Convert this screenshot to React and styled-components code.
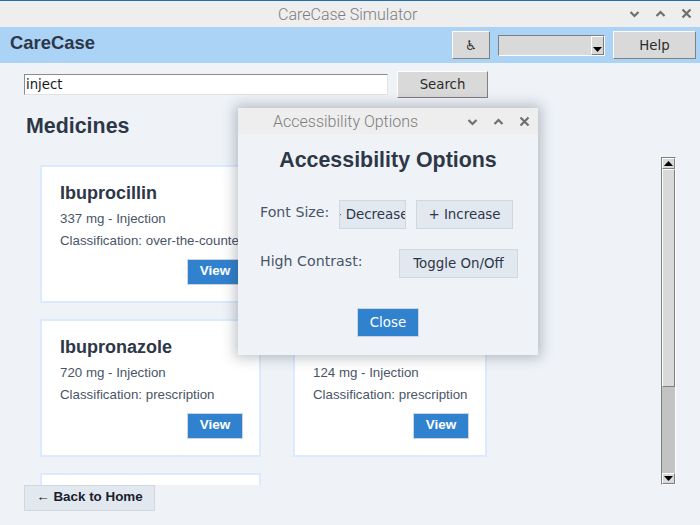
import React from "react";
import styled, { createGlobalStyle } from "styled-components";

const Global = createGlobalStyle`
  html, body { margin: 0; padding: 0; width: 700px; height: 525px; overflow: hidden; background: #eff3f8; }
  #root { width: 700px; height: 525px; }
`;

const Screen = styled.div`
  position: relative;
  width: 700px;
  height: 525px;
  display: flex;
  flex-direction: column;
  background: #eff3f8;
  overflow: hidden;
  font-family: "Liberation Sans", Arial, sans-serif;
`;

const TitleBar = styled.div`
  position: relative;
  flex: none;
  height: ${p => (p.$dialog ? 26 : 27)}px;
  box-sizing: border-box;
  background: #eeeeee;
  display: flex;
  align-items: center;
  justify-content: flex-end;
  gap: 13px;
  padding-right: 7px;
  ${p => (p.$dialog ? "" : "border-top: 1px solid #1f6fb0; padding-bottom: 1px;")}
`;

const TitleText = styled.div`
  position: absolute;
  left: ${p => p.$left}px;
  top: 0;
  bottom: 0;
  display: flex;
  align-items: center;
  font-family: Roboto, sans-serif;
  font-weight: 300;
  font-size: 16px;
  color: #7d7d7d;
  white-space: nowrap;
`;

const WinIcon = styled.svg`
  width: 13px;
  height: 13px;
  fill: none;
  stroke: #6f6f6f;
  stroke-width: 2.2;
`;

const Down = () => <WinIcon viewBox="0 0 13 13"><path d="M2.5 5 L6.5 9 L10.5 5" /></WinIcon>;
const Up = () => <WinIcon viewBox="0 0 13 13"><path d="M2.5 9 L6.5 5 L10.5 9" /></WinIcon>;
const X = () => <WinIcon viewBox="0 0 13 13"><path d="M2.5 2.5 L10.5 10.5 M10.5 2.5 L2.5 10.5" /></WinIcon>;

const Header = styled.header`
  flex: none;
  height: 36px;
  box-sizing: border-box;
  background: #aad3f5;
  display: flex;
  align-items: center;
  padding: 0 4px 0 10px;
`;

const Brand = styled.div`
  font-weight: 700;
  font-size: 18.4px;
  color: #2d3748;
  margin-top: -5px;
  flex: 1;
`;

const TkButton = styled.button`
  box-sizing: border-box;
  width: ${p => p.$w}px;
  height: ${p => p.$h}px;
  padding: 0;
  background: #d9d9d9;
  border: 1px solid;
  border-color: #ffffff #7f7f7f #7f7f7f #ffffff;
  font-family: "DejaVu Sans", sans-serif;
  font-size: 13.3px;
  color: #2b2b2b;
  display: flex;
  align-items: center;
  justify-content: center;
`;

const Combo = styled.div`
  box-sizing: border-box;
  width: 107px;
  height: 21px;
  margin: 0 8px 0 8px;
  background: #d9d9d9;
  border: 1px solid;
  border-color: #7f7f7f #ffffff #ffffff #7f7f7f;
  display: flex;
  justify-content: flex-end;
`;

const ComboArrow = styled.div`
  box-sizing: border-box;
  width: 13px;
  height: 19px;
  border: 1px solid;
  border-color: #ffffff #7f7f7f #7f7f7f #ffffff;
  display: flex;
  align-items: flex-end;
  justify-content: center;
  padding-bottom: 2px;
`;

const Arrow = styled.svg`
  width: 9px;
  height: 5px;
  fill: #000;
  display: block;
`;

const SearchRow = styled.div`
  flex: none;
  display: flex;
  align-items: center;
  height: 43px;
  padding: 0 0 0 24px;
  box-sizing: border-box;
`;

const SearchInput = styled.input`
  box-sizing: border-box;
  width: 364px;
  height: 21px;
  margin: 0 9px 0 0;
  padding: 0 1px;
  background: #fff;
  border: 1px solid;
  border-color: #8c8c8c #e2e2e2 #e2e2e2 #8c8c8c;
  outline: none;
  font-family: "DejaVu Sans", sans-serif;
  font-size: 13.3px;
  color: #1a1a1a;
`;

const PageTitle = styled.h1`
  margin: 0;
  box-sizing: border-box;
  padding: 8px 0 0 26px;
  height: 59px;
  flex: none;
  font-size: 21.4px;
  line-height: 25px;
  font-weight: 700;
  color: #2d3748;
`;

const Content = styled.div`
  flex: none;
  display: flex;
  height: 320px;
  padding-left: 40px;
  box-sizing: border-box;
  overflow: hidden;
`;

const CardGrid = styled.div`
  width: 621px;
  display: grid;
  grid-template-columns: 221px 194px;
  grid-auto-rows: 138px;
  column-gap: 32px;
  row-gap: 16px;
  align-content: start;
`;

const Card = styled.article`
  box-sizing: border-box;
  background: #fff;
  border: 2px solid #dbeafe;
  padding: 16px 16px 0 18px;
  display: flex;
  flex-direction: column;
  overflow: hidden;
`;

const CardName = styled.h2`
  margin: 0 0 7px;
  min-height: 21px;
  font-size: 18px;
  line-height: 21px;
  font-weight: 700;
  color: #2d3748;
  white-space: nowrap;
`;

const CardLine = styled.p`
  margin: 0 0 7px;
  font-size: 13.3px;
  line-height: 15px;
  color: #4a5568;
  white-space: nowrap;
`;

const ViewButton = styled.button`
  box-sizing: border-box;
  align-self: flex-end;
  width: 56px;
  height: 26px;
  margin: 4px 0 0;
  padding: 0 0 4px;
  background: #3182ce;
  border: 1px solid #cfd4da;
  color: #fff;
  font-family: "Liberation Sans", sans-serif;
  font-weight: 700;
  font-size: 13.5px;
`;

const Scrollbar = styled.div`
  position: absolute;
  left: 661px;
  top: 157px;
  width: 15px;
  height: 328px;
  box-sizing: border-box;
  background: #c3c3c3;
  border: 1px solid;
  border-color: #7f7f7f #ffffff #ffffff #7f7f7f;
  display: flex;
  flex-direction: column;
`;

const ScrollButton = styled.div`
  flex: none;
  box-sizing: border-box;
  height: 11px;
  background: #d9d9d9;
  border: 1px solid;
  border-color: #ffffff #7f7f7f #7f7f7f #ffffff;
  display: flex;
  align-items: center;
  justify-content: center;
`;

const ScrollThumb = styled.div`
  flex: none;
  box-sizing: border-box;
  height: 218px;
  background: #d9d9d9;
  border: 1px solid;
  border-color: #ffffff #7f7f7f #7f7f7f #ffffff;
`;

const ScrollTrack = styled.div`
  flex: 1;
`;

const FooterRow = styled.div`
  flex: none;
  padding-left: 24px;
`;

const BackButton = styled.button`
  box-sizing: border-box;
  width: 131px;
  height: 26px;
  padding: 0 0 4px;
  background: #e2e8f0;
  border: 1px solid #d3d6da;
  color: #1a202c;
  font-family: "Liberation Sans", sans-serif;
  font-weight: 700;
  font-size: 13.4px;
`;

const Dialog = styled.section`
  position: absolute;
  left: 238px;
  top: 108px;
  width: 300px;
  height: 247px;
  background: #eff3f8;
  box-shadow: 0 0 12px 3px rgba(30, 40, 55, 0.28);
  display: flex;
  flex-direction: column;
`;

const DialogHeading = styled.h2`
  margin: 0;
  height: 52px;
  display: flex;
  align-items: center;
  justify-content: center;
  font-size: 21.4px;
  font-weight: 700;
  color: #2d3748;
`;

const OptionRow = styled.div`
  display: flex;
  align-items: center;
  height: 29px;
  padding-left: 22px;
  margin-top: ${p => p.$mt}px;
`;

const OptionLabel = styled.span`
  font-family: "DejaVu Sans", sans-serif;
  font-size: 14.2px;
  color: #4a5568;
  margin-top: -5px;
  width: ${p => p.$w}px;
  flex: none;
  white-space: nowrap;
`;

const SoftButton = styled.button`
  box-sizing: border-box;
  width: ${p => p.$w}px;
  height: 29px;
  margin-left: ${p => p.$ml || 0}px;
  padding: 0;
  flex: none;
  background: #e2e8f0;
  border: 1px solid #d3d6da;
  color: #2d3748;
  font-family: "DejaVu Sans", sans-serif;
  font-size: 13.4px;
  white-space: nowrap;
  overflow: hidden;
  display: flex;
  align-items: center;
  justify-content: center;
`;

const CloseRow = styled.div`
  display: flex;
  justify-content: center;
  margin-top: 30px;
`;

const CloseButton = styled.button`
  box-sizing: border-box;
  width: 62px;
  height: 29px;
  padding: 0;
  background: #3182ce;
  border: 1px solid #cfd4da;
  color: #fff;
  font-family: "DejaVu Sans", sans-serif;
  font-size: 13.4px;
`;

const meds = [
  { id: 1, name: "Ibuprocillin", dose: "337 mg - Injection", cls: "over-the-counter" },
  { id: 2 },
  { id: 3, name: "Ibupronazole", dose: "720 mg - Injection", cls: "prescription" },
  { id: 4, dose: "124 mg - Injection", cls: "prescription" },
  { id: 5 },
];

export default function App() {
  return (
    <Screen>
      <Global />
      <TitleBar>
        <TitleText $left={278}>CareCase Simulator</TitleText>
        <Down /><Up /><X />
      </TitleBar>
      <Header>
        <Brand>CareCase</Brand>
        <TkButton $w={38} $h={28}>♿</TkButton>
        <Combo>
          <ComboArrow>
            <Arrow viewBox="0 0 9 5"><path d="M0 0 H9 L4.5 5 Z" /></Arrow>
          </ComboArrow>
        </Combo>
        <TkButton $w={83} $h={28}>Help</TkButton>
      </Header>
      <SearchRow>
        <SearchInput defaultValue="inject" />
        <TkButton $w={91} $h={27}>Search</TkButton>
      </SearchRow>
      <PageTitle>Medicines</PageTitle>
      <Content>
        <CardGrid>
          {meds.map(m => (
            <Card key={m.id}>
              {m.dose || m.name ? <CardName>{m.name}</CardName> : null}
              {m.dose ? <CardLine>{m.dose}</CardLine> : null}
              {m.cls ? <CardLine>Classification: {m.cls}</CardLine> : null}
              {m.dose ? <ViewButton>View</ViewButton> : null}
            </Card>
          ))}
        </CardGrid>
      </Content>
      <FooterRow>
        <BackButton>← Back to Home</BackButton>
      </FooterRow>
      <Scrollbar>
        <ScrollButton><Arrow viewBox="0 0 9 5"><path d="M0 5 H9 L4.5 0 Z" /></Arrow></ScrollButton>
        <ScrollThumb />
        <ScrollTrack />
        <ScrollButton><Arrow viewBox="0 0 9 5"><path d="M0 0 H9 L4.5 5 Z" /></Arrow></ScrollButton>
      </Scrollbar>
      <Dialog>
        <TitleBar $dialog>
          <TitleText $left={35}>Accessibility Options</TitleText>
          <Down /><Up /><X />
        </TitleBar>
        <DialogHeading>Accessibility Options</DialogHeading>
        <OptionRow $mt={14}>
          <OptionLabel $w={79}>Font Size:</OptionLabel>
          <SoftButton $w={67}>- Decrease</SoftButton>
          <SoftButton $w={97} $ml={10}>+ Increase</SoftButton>
        </OptionRow>
        <OptionRow $mt={20}>
          <OptionLabel $w={139}>High Contrast:</OptionLabel>
          <SoftButton $w={119}>Toggle On/Off</SoftButton>
        </OptionRow>
        <CloseRow>
          <CloseButton>Close</CloseButton>
        </CloseRow>
      </Dialog>
    </Screen>
  );
}
